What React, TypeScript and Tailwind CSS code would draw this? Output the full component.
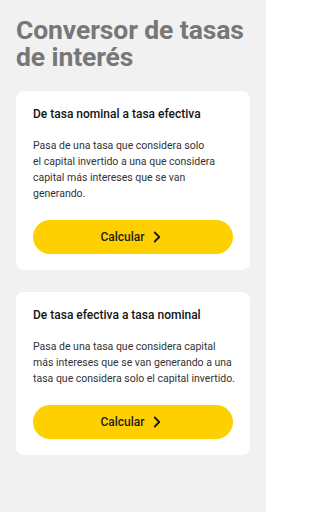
import { ChevronRight } from "lucide-react";

const cards = [
  {
    title: "De tasa nominal a tasa efectiva",
    lines: [
      "Pasa de una tasa que considera solo",
      "el capital invertido a una que considera",
      "capital más intereses que se van",
      "generando.",
    ],
  },
  {
    title: "De tasa efectiva a tasa nominal",
    lines: [
      "Pasa de una tasa que considera capital",
      "más intereses que se van generando a una",
      "tasa que considera solo el capital invertido.",
    ],
  },
];

export default function App() {
  return (
    <div
      className="min-h-screen w-[266px] bg-[#f1f1f1] pb-10"
      style={{ fontFamily: "Roboto, 'Liberation Sans', sans-serif" }}
    >
      <h1 className="px-4 pt-4 text-[26.5px] font-bold leading-[27px] tracking-[-0.1px] text-[#777777]">
        Conversor de tasas
        <br />
        de interés
      </h1>
      <div className="mt-[21px] flex flex-col gap-[22px] px-4">
        {cards.map((card) => (
          <section key={card.title} className="rounded-lg bg-white px-[17px] pb-4 pt-[15px]">
            <h2 className="text-[12px] font-medium leading-[16px] text-[#141414]">{card.title}</h2>
            <p className="mt-4 text-[10.5px] leading-[16px] text-[#333333]">
              {card.lines.map((l) => (
                <span key={l} className="block whitespace-nowrap">
                  {l}
                </span>
              ))}
            </p>
            <button
              type="button"
              className="mt-[18px] flex h-[34px] w-full items-center justify-center gap-[3px] rounded-full bg-[#ffd000] text-[12px] font-medium text-[#1a1a1a]"
            >
              Calcular
              <ChevronRight size={18} strokeWidth={2.4} />
            </button>
          </section>
        ))}
      </div>
    </div>
  );
}
